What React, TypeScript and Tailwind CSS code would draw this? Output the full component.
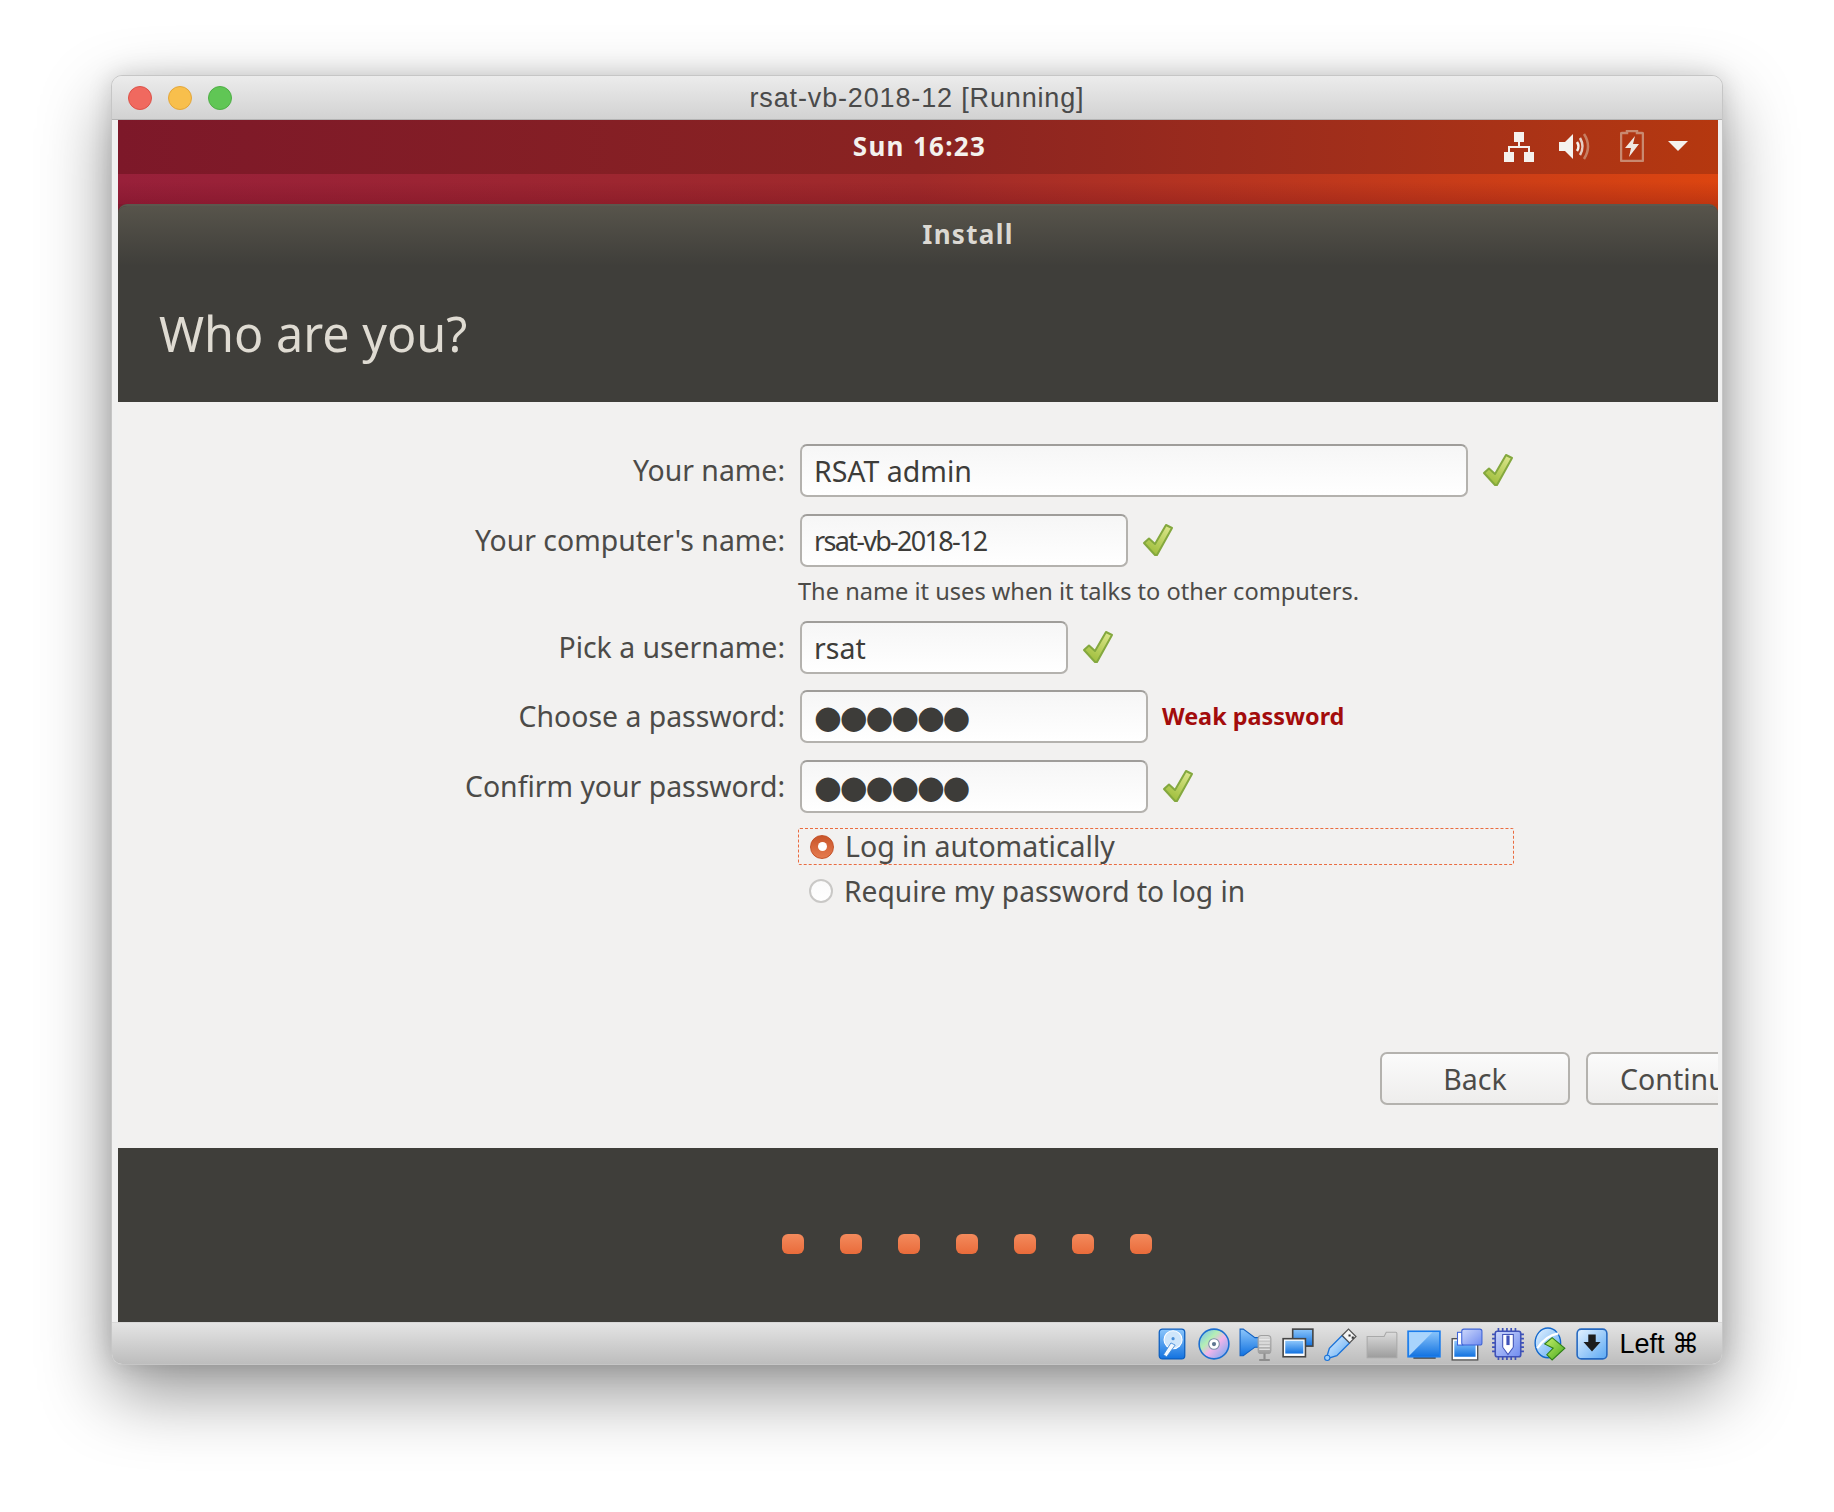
import React from "react"

const UI_FONT = "font-['Noto_Sans','Open_Sans',sans-serif]"

function Check() {
    return (
        <svg width="32" height="34" viewBox="0 0 32 34" className="shrink-0 -mt-[2px]">
            <defs>
                <linearGradient id="chk" x1="0.8" y1="0" x2="0.3" y2="1">
                    <stop offset="0" stopColor="#dbe68a" />
                    <stop offset="1" stopColor="#9dbd3a" />
                </linearGradient>
            </defs>
            <path d="M2 20 L7 15.5 L13 21 L24 2 L30 5 L15 32 L13 32 Z" fill="url(#chk)" stroke="#84a83e" strokeWidth="2" strokeLinejoin="round" />
        </svg>
    )
}

function Field({ width, value, textClass }: { width: string; value: string; textClass: string }) {
    return (
        <div className={`${width} h-[53px] shrink-0 flex items-center px-[12px] pt-[1px] rounded-[7px] border-2 border-[#b4b2ae] border-t-[#9f9d9a] bg-gradient-to-b from-[#f6f6f6] to-white text-[#3d3c39] ${textClass}`}>
            {value}
        </div>
    )
}

function Row({ label, children, className }: { label: string; children: React.ReactNode; className?: string }) {
    return (
        <div className={`flex items-center ${className ?? ""}`}>
            <div className="w-[667px] shrink-0 text-right text-[28.400px] text-[#4c4b48] leading-none pb-[1px]">{label}</div>
            <div className="ml-[15px] flex items-center gap-[14px]">{children}</div>
        </div>
    )
}

function Button({ label }: { label: string }) {
    return (
        <div className="w-[190px] h-[53px] shrink-0 flex items-center justify-center rounded-[7px] border-2 border-[#b4b2ae] bg-gradient-to-b from-[#fbfbfb] to-[#eeedec] text-[28.500px] text-[#4c4b48] pt-[1px]">
            {label}
        </div>
    )
}

function Radio({ on }: { on?: boolean }) {
    return on ? (
        <div className="w-[24px] h-[24px] shrink-0 rounded-full bg-gradient-to-b from-[#c9552a] to-[#e57b4f] border border-[#c4532a] flex items-center justify-center">
            <div className="w-[9px] h-[9px] rounded-full bg-white" />
        </div>
    ) : (
        <div className="w-[24px] h-[24px] shrink-0 rounded-full bg-gradient-to-b from-[#fafafa] to-white border-2 border-[#c9c8c6]" />
    )
}

function TopBarIcons() {
    return (
        <div className="flex items-center justify-end pr-[30px]">
            <svg width="32" height="30" viewBox="0 0 32 30" className="mt-[2px]">
                <path d="M11 0H21V10H11Z M1 20H11V30H1Z M21 20H31V30H21Z" fill="#f5f2ee" />
                <path d="M16 10V15M6 20V15H26V20" fill="none" stroke="#f5f2ee" strokeWidth="2" />
            </svg>
            <svg width="31" height="27" viewBox="0 0 31 27" className="ml-[24px]">
                <path d="M0 9H6L14 1V26L6 18H0Z" fill="#f5f2ee" />
                <path d="M18 9Q21 13.500 18 18" fill="none" stroke="#f5f2ee" strokeWidth="2.500" />
                <path d="M21 5Q26 13.500 21 22" fill="none" stroke="#e6cfc6" strokeWidth="2.500" />
                <path d="M25 1Q33 13.500 25 26" fill="none" stroke="#c77f63" strokeWidth="2.500" />
            </svg>
            <svg width="24" height="32" viewBox="0 0 24 32" className="ml-[30px]">
                <path d="M7 3V1H17V3H22Q23 3 23 4V30Q23 31 22 31H2Q1 31 1 30V4Q1 3 2 3Z" fill="none" stroke="#c98970" strokeWidth="2.500" />
                <path d="M15 6L5 18H11L9 27L19 14H13Z" fill="#f0e8e2" />
            </svg>
            <svg width="20" height="10" viewBox="0 0 20 10" className="ml-[24px]">
                <path d="M0 0H20L10 10Z" fill="#f5f2ee" />
            </svg>
        </div>
    )
}

// VirtualBox status bar icons, drawn on a 32 grid
function StatusIcon({ children }: { children: React.ReactNode }) {
    return (
        <div className="w-[42px] h-[32px] flex items-center justify-center shrink-0">
            <svg width="34" height="34" viewBox="0 0 32 32">{children}</svg>
        </div>
    )
}

function SharedGradients() {
    return (
        <svg className="absolute w-0 h-0">
            <defs>
                <linearGradient id="blue" x1="0" y1="0" x2="0" y2="1">
                    <stop offset="0" stopColor="#8cc6fb" />
                    <stop offset="1" stopColor="#1272e0" />
                </linearGradient>
                <linearGradient id="pale" x1="0" y1="0" x2="1" y2="1">
                    <stop offset="0" stopColor="#e6f3ff" />
                    <stop offset="1" stopColor="#5aa8f4" />
                </linearGradient>
                <linearGradient id="grey" x1="0" y1="0" x2="0" y2="1">
                    <stop offset="0" stopColor="#dcdcdc" />
                    <stop offset="1" stopColor="#9c9c9c" />
                </linearGradient>
                <linearGradient id="violet" x1="0" y1="0" x2="1" y2="1">
                    <stop offset="0" stopColor="#cdd8fb" />
                    <stop offset="1" stopColor="#6f8bf0" />
                </linearGradient>
                <linearGradient id="green" x1="0" y1="0" x2="1" y2="1">
                    <stop offset="0" stopColor="#c6f06a" />
                    <stop offset="1" stopColor="#46a81e" />
                </linearGradient>
                <linearGradient id="disc" x1="0" y1="0" x2="1" y2="1">
                    <stop offset="0" stopColor="#6fb8f8" />
                    <stop offset="0.35" stopColor="#b4efb4" />
                    <stop offset="0.55" stopColor="#f0b4ea" />
                    <stop offset="1" stopColor="#5fa8f0" />
                </linearGradient>
            </defs>
        </svg>
    )
}

function StatusIcons() {
    return (
        <>
            <StatusIcon>
                <rect x="4" y="2" width="24" height="28" rx="3" fill="url(#blue)" stroke="#0c5fc0" strokeWidth="1.200" />
                <circle cx="17" cy="12" r="8.500" fill="#cfe6fb" stroke="#fff" />
                <circle cx="17" cy="11" r="1.500" fill="#4a8fd8" />
                <path d="M8 26L15 15L19 17L11 28Z" fill="#f2f8fe" stroke="#3d86d6" strokeWidth="0.800" />
            </StatusIcon>
            <StatusIcon>
                <circle cx="16" cy="16" r="14" fill="url(#disc)" stroke="#1c6fd0" strokeWidth="1.500" />
                <circle cx="16" cy="16" r="5" fill="#fff" stroke="#7a8ea5" />
                <circle cx="16" cy="16" r="2" fill="#5f7690" />
            </StatusIcon>
            <StatusIcon>
                <path d="M1 2H4L15 10H20V19H15L4 27H1Z" fill="url(#blue)" stroke="#1160c0" strokeWidth="1" />
                <rect x="18" y="8" width="12" height="17" rx="3" fill="url(#grey)" stroke="#a0a0a0" />
                <path d="M19 12H29M19 15H29M19 18H29M19 21H29" stroke="#f0f0f0" strokeWidth="1" />
                <path d="M24 25V30M19 31H29" stroke="#8d8d8d" strokeWidth="2" />
            </StatusIcon>
            <StatusIcon>
                <rect x="11" y="2" width="19" height="16" fill="url(#blue)" stroke="#444" strokeWidth="1.500" />
                <rect x="2" y="11" width="21" height="17" fill="#fff" stroke="#444" strokeWidth="1.500" />
                <rect x="4" y="13" width="17" height="12" fill="url(#blue)" />
            </StatusIcon>
            <StatusIcon>
                <path d="M3 30L6 20L18 8L25 15L13 27Z" fill="url(#pale)" stroke="#1c73d8" strokeWidth="1.300" />
                <circle cx="4" cy="29" r="2.500" fill="#9fd0fa" stroke="#1c73d8" />
                <path d="M18 8L24 2L31 9L25 15Z" fill="#f5f5f5" stroke="#555" strokeWidth="1.200" />
                <path d="M24 7h2v2h-2zM27 9h2v2h-2z" fill="#333" />
            </StatusIcon>
            <StatusIcon>
                <path d="M2 9H18L20 5H29Q30 5 30 6V29H2Z" fill="url(#grey)" stroke="#a9a9a9" />
            </StatusIcon>
            <StatusIcon>
                <path d="M6 28H27V30H6Z" fill="#555" />
                <rect x="1" y="4" width="30" height="24" fill="url(#blue)" stroke="#1a7cec" strokeWidth="1.500" />
                <path d="M2 27L24 5H2Z" fill="#a9d4fc" />
            </StatusIcon>
            <StatusIcon>
                <rect x="3" y="11" width="24" height="20" fill="#fff" stroke="#555" strokeWidth="1.300" />
                <rect x="5" y="13" width="20" height="15" fill="url(#blue)" />
                <rect x="8" y="5" width="5" height="12" fill="#fff" stroke="#3d63d8" />
                <rect x="12" y="2" width="19" height="15" rx="2" fill="url(#violet)" stroke="#3d63d8" />
            </StatusIcon>
            <StatusIcon>
                <path d="M7 1v30M11 1v30M15 1v30M19 1v30M23 1v30M1 7h30M1 11h30M1 15h30M1 19h30M1 23h30" stroke="#3f52b8" strokeWidth="1.600" />
                <rect x="4" y="4" width="24" height="24" rx="2" fill="url(#violet)" stroke="#3f52b8" strokeWidth="1.500" />
                <path d="M11 7H21V19L16 26L11 19Z" fill="#fff" stroke="#3f52b8" />
                <path d="M14.500 8H17.500V17H14.500Z" fill="#3f52b8" />
            </StatusIcon>
            <StatusIcon>
                <ellipse cx="14" cy="15" rx="12" ry="14" fill="url(#pale)" stroke="#1468cc" strokeWidth="1.300" />
                <path d="M4 20Q12 8 24 6" fill="none" stroke="#fff" strokeWidth="2" />
                <path d="M11 16L18 10L30 20L18 31L13 26L19 20Z" fill="url(#green)" stroke="#2f7f18" />
            </StatusIcon>
            <StatusIcon>
                <rect x="2" y="2" width="28" height="28" rx="4" fill="url(#pale)" stroke="#2468c0" strokeWidth="1.500" />
                <path d="M12.500 7H19.500V14H24L16 23L8 14H12.500Z" fill="#1d1d1d" />
            </StatusIcon>
        </>
    )
}

const DOTS_TEXT = "font-['DejaVu_Sans',sans-serif] text-[32px] tracking-[-2.2px]"

export default function App() {
    return (
        <div className="w-[1834px] h-[1512px] bg-white overflow-hidden pt-[75px] pl-[111px]">
            <SharedGradients />
            {/* VirtualBox window */}
            <div className="w-[1612px] h-[1290px] rounded-[11px] border border-[#c6c6c6] bg-[#f1f1f1] overflow-hidden flex flex-col shadow-[0_28px_70px_rgba(0,0,0,0.42),0_0_24px_rgba(0,0,0,0.14)]">
                <div className="h-[44px] shrink-0 relative flex items-center justify-center bg-gradient-to-b from-[#ececec] to-[#d2d2d2] border-b border-[#b4b4b4]">
                    <div className="absolute left-[16px] top-[10px] flex gap-[16px]">
                        <div className="w-[24px] h-[24px] rounded-full bg-[#f0695f] border border-[#dc5249]" />
                        <div className="w-[24px] h-[24px] rounded-full bg-[#f8bf4c] border border-[#e3a63a]" />
                        <div className="w-[24px] h-[24px] rounded-full bg-[#60c655] border border-[#4fae46]" />
                    </div>
                    <span className="font-['Liberation_Sans',sans-serif] text-[27px] tracking-[0.85px] text-[#4a4a4a] pt-[2px]">rsat-vb-2018-12 [Running]</span>
                </div>

                <div className="flex-1 min-h-0 flex flex-col pl-[6px] pr-[4px]">
                    <div className={`w-[1600px] flex-1 min-h-0 flex flex-col overflow-hidden ${UI_FONT}`}>
                        {/* Ubuntu desktop wallpaper */}
                        <div className="shrink-0 bg-gradient-to-r from-[#7d1a2e] via-[#8d2224] to-[#b8380f]">
                            <div className="h-[54px] pb-[2px] grid grid-cols-[1fr_auto_1fr] items-center bg-gradient-to-r from-[#7d1829] via-[#8a2321] to-[#b5380f]">
                                <div />
                                <div className="pl-[3px] text-[26px] font-bold text-[#f4f1ed] tracking-[1.300px]">Sun 16:23</div>
                                <TopBarIcons />
                            </div>
                            <div className="h-[30px] bg-[linear-gradient(to_bottom,transparent_25%,rgba(90,0,20,0.22)),linear-gradient(to_right,#98203a,#a02a2a,#dc4510)]" />
                            <div className="rounded-t-[9px] overflow-hidden bg-[#3f3e3a] border-t-2 border-[#5b584e]">
                                <div className="h-[60px] pl-[100px] pb-[4px] flex items-center justify-center bg-gradient-to-b from-[#57544b] to-[#3f3e3a] text-[26px] font-bold text-[#dcd9d3] tracking-[1.300px]">
                                    Install
                                </div>
                                <div className="h-[136px] pl-[41px] pt-[34px] text-[48.500px] leading-[66px] text-[#dfdbd2]">Who are you?</div>
                            </div>
                        </div>

                        {/* Form */}
                        <div className="flex-1 min-h-0 bg-[#f2f1f0] flex flex-col pt-[42px] pb-[43px]">
                            <Row label="Your name:">
                                <Field width="w-[668px]" value="RSAT admin" textClass="text-[28.500px]" />
                                <Check />
                            </Row>
                            <Row label="Your computer's name:" className="mt-[17px]">
                                <Field width="w-[328px]" value="rsat-vb-2018-12" textClass="text-[27px] tracking-[-1.700px]" />
                                <Check />
                            </Row>
                            <div className="ml-[680px] mt-[8px] h-[40px] text-[23.600px] leading-[32px] text-[#4c4b48]">The name it uses when it talks to other computers.</div>
                            <Row label="Pick a username:" className="mt-[6px]">
                                <Field width="w-[268px]" value="rsat" textClass="text-[28.500px]" />
                                <Check />
                            </Row>
                            <Row label="Choose a password:" className="mt-[16px]">
                                <Field width="w-[348px]" value="●●●●●●" textClass={DOTS_TEXT} />
                                <span className="text-[23.400px] font-bold text-[#a30c0c]">Weak password</span>
                            </Row>
                            <Row label="Confirm your password:" className="mt-[17px]">
                                <Field width="w-[348px]" value="●●●●●●" textClass={DOTS_TEXT} />
                                <Check />
                            </Row>
                            <div className="ml-[680px] mt-[15px] w-[716px] h-[37px] flex items-center gap-[11px] pl-[11px] border border-dashed border-[#ea6c40] rounded-[2px] text-[28.500px] text-[#4c4b48]">
                                <Radio on />
                                <span>Log in automatically</span>
                            </div>
                            <div className="ml-[691px] mt-[10px] h-[32px] flex items-center gap-[11px] text-[28.200px] text-[#4c4b48]">
                                <Radio />
                                <span>Require my password to log in</span>
                            </div>
                            <div className="mt-auto ml-[1262px] flex gap-[16px]">
                                <Button label="Back" />
                                <Button label="Continue" />
                            </div>
                        </div>

                        {/* Slideshow dots */}
                        <div className="h-[174px] shrink-0 bg-[#3f3e3a] pt-[86px] pl-[664px] flex items-start gap-[36px]">
                            {[0, 1, 2, 3, 4, 5, 6].map((i) => (
                                <div key={i} className="w-[22px] h-[20px] rounded-[6px] bg-gradient-to-b from-[#f38a5c] to-[#e96b3a]" />
                            ))}
                        </div>
                    </div>

                    {/* VirtualBox status bar */}
                    <div className="-ml-[6px] -mr-[4px] h-[42px] shrink-0 flex items-center justify-end pr-[23px] bg-gradient-to-b from-[#e4e4e4] to-[#bdbdbd] border-t border-[#d8d8d8]">
                        <StatusIcons />
                        <span className="ml-[6px] pt-[2px] font-['Liberation_Sans','DejaVu_Sans',sans-serif] text-[27px] text-black">Left ⌘</span>
                    </div>
                </div>
            </div>
        </div>
    )
}
